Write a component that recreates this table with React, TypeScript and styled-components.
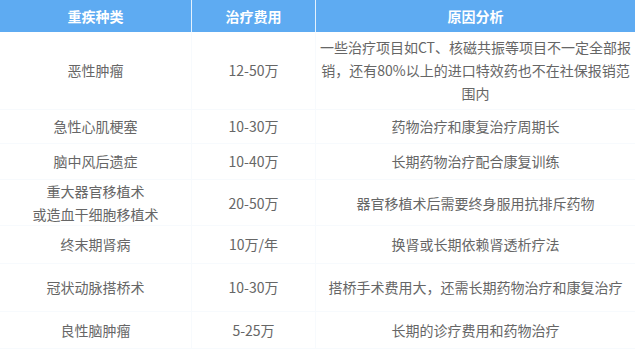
import React from 'react'
import styled, { createGlobalStyle } from 'styled-components'

const GlobalStyle = createGlobalStyle`
  html, body {
    margin: 0;
    padding: 0;
    background: #fff;
  }
  body {
    font-family: "Noto Sans CJK SC", "Liberation Sans", sans-serif;
  }
`

const Table = styled.div`
  width: 635px;
  display: flex;
  flex-direction: column;
`

const Row = styled.div<{ $height: number }>`
  display: grid;
  grid-template-columns: 192px 124px 1fr;
  height: ${props => props.$height}px;
  border-bottom: 1px solid #f7fafd;
  box-sizing: border-box;
`

const HeaderRow = styled.div`
  display: grid;
  grid-template-columns: 192px 124px 1fr;
  height: 32px;
  background: #5eabf2;
`

const HeadCell = styled.div<{ $last?: boolean }>`
  display: flex;
  align-items: center;
  justify-content: center;
  color: #fff;
  font-size: 14px;
  font-weight: 700;
  border-right: ${props => (props.$last ? 'none' : '1px solid #e4f1fd')};
`

const Cell = styled.div<{ $last?: boolean }>`
  display: flex;
  align-items: center;
  justify-content: center;
  text-align: center;
  color: #666;
  font-size: 14px;
  line-height: 23px;
  padding: 0 1px;
  border-right: ${props => (props.$last ? 'none' : '1px solid #f7fafd')};
`

const rows: { name: string[]; cost: string; reason: string; height: number }[] = [
  {
    name: ['恶性肿瘤'],
    cost: '12-50万',
    reason: '一些治疗项目如CT、核磁共振等项目不一定全部报销，还有80%以上的进口特效药也不在社保报销范围内',
    height: 78,
  },
  { name: ['急性心肌梗塞'], cost: '10-30万', reason: '药物治疗和康复治疗周期长', height: 34 },
  { name: ['脑中风后遗症'], cost: '10-40万', reason: '长期药物治疗配合康复训练', height: 36 },
  {
    name: ['重大器官移植术', '或造血干细胞移植术'],
    cost: '20-50万',
    reason: '器官移植术后需要终身服用抗排斥药物',
    height: 46,
  },
  { name: ['终末期肾病'], cost: '10万/年', reason: '换肾或长期依赖肾透析疗法', height: 38 },
  { name: ['冠状动脉搭桥术'], cost: '10-30万', reason: '搭桥手术费用大，还需长期药物治疗和康复治疗', height: 48 },
  { name: ['良性脑肿瘤'], cost: '5-25万', reason: '长期的诊疗费用和药物治疗', height: 37 },
]

export default function App() {
  return (
    <>
      <GlobalStyle />
      <Table>
        <HeaderRow>
          <HeadCell>重疾种类</HeadCell>
          <HeadCell>治疗费用</HeadCell>
          <HeadCell $last>原因分析</HeadCell>
        </HeaderRow>
        {rows.map((row, i) => (
          <Row key={i} $height={row.height}>
            <Cell>
              <div>
                {row.name.map((line, j) => (
                  <div key={j}>{line}</div>
                ))}
              </div>
            </Cell>
            <Cell>{row.cost}</Cell>
            <Cell $last>{row.reason}</Cell>
          </Row>
        ))}
      </Table>
    </>
  )
}
